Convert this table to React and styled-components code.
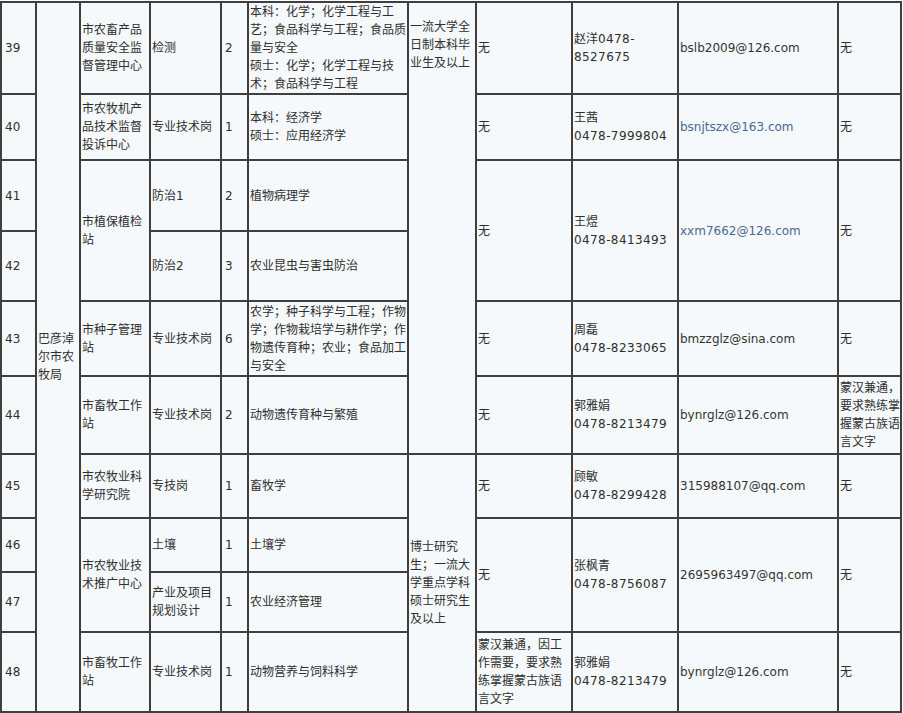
import React from 'react'
import styled, { createGlobalStyle } from 'styled-components'

const Global = createGlobalStyle`
  body {
    margin: 0;
    background: #fff;
    font-family: "DejaVu Sans", "Noto Sans CJK SC", sans-serif;
  }
`;

const Table = styled.table`
  border-collapse: collapse;
  table-layout: fixed;
  width: 901px;
  margin-top: 1px;
  font-size: 12px;
  line-height: 18px;
  color: #2f2f2f;
`;

const Row = styled.tr`
  height: ${(p) => p.$h}px;
`;

const Cell = styled.td`
  border: 2px solid #3f3f3f;
  background: #f6f9fc;
  padding: 0 0 0 1px;
  text-align: left;
  vertical-align: ${(p) => (p.$top ? 'top' : 'middle')};
  ${(p) => p.$top && `padding-top: 15px;`}
  word-break: normal;
  overflow-wrap: normal;
`;

const Num = styled.span`
  padding-left: 2px;
`;

const Phone = styled.span`
  letter-spacing: 0.4px;
`;

const Mail = styled.span`
  color: ${(p) => (p.$link ? '#4a6892' : '#333')};
`;

const cols = [35, 44, 70, 71, 27, 160, 68, 96, 106, 160, 63];

const Contact = ({ name, phone }) => (
  <>
    {name}
    <br />
    <Phone>{phone}</Phone>
  </>
);

const App = () => {
  return (
    <>
      <Global />
      <Table>
        <colgroup>
          {cols.map((w, i) => (
            <col key={i} style={{ width: w }} />
          ))}
        </colgroup>
        <tbody>
          <Row $h={92}>
            <Cell><Num>39</Num></Cell>
            <Cell rowSpan={10}>巴彦淖尔市农牧局</Cell>
            <Cell>市农畜产品质量安全监督管理中心</Cell>
            <Cell>检测</Cell>
            <Cell><Num>2</Num></Cell>
            <Cell>
              本科：化学；化学工程与工艺；食品科学与工程；食品质量与安全
              <br />
              硕士：化学；化学工程与技术；食品科学与工程
            </Cell>
            <Cell rowSpan={6} $top>一流大学全日制本科毕业生及以上</Cell>
            <Cell>无</Cell>
            <Cell>赵洋<Phone>0478-</Phone><br /><Phone>8527675</Phone></Cell>
            <Cell><Mail>bslb2009@126.com</Mail></Cell>
            <Cell>无</Cell>
          </Row>
          <Row $h={66}>
            <Cell><Num>40</Num></Cell>
            <Cell>市农牧机产品技术监督投诉中心</Cell>
            <Cell>专业技术岗</Cell>
            <Cell><Num>1</Num></Cell>
            <Cell>
              本科：经济学
              <br />
              硕士：应用经济学
            </Cell>
            <Cell>无</Cell>
            <Cell><Contact name="王茜" phone="0478-7999804" /></Cell>
            <Cell><Mail $link>bsnjtszx@163.com</Mail></Cell>
            <Cell>无</Cell>
          </Row>
          <Row $h={71}>
            <Cell><Num>41</Num></Cell>
            <Cell rowSpan={2}>市植保植检站</Cell>
            <Cell>防治1</Cell>
            <Cell><Num>2</Num></Cell>
            <Cell>植物病理学</Cell>
            <Cell rowSpan={2}>无</Cell>
            <Cell rowSpan={2}><Contact name="王煜" phone="0478-8413493" /></Cell>
            <Cell rowSpan={2}><Mail $link>xxm7662@126.com</Mail></Cell>
            <Cell rowSpan={2}>无</Cell>
          </Row>
          <Row $h={70}>
            <Cell><Num>42</Num></Cell>
            <Cell>防治2</Cell>
            <Cell><Num>3</Num></Cell>
            <Cell>农业昆虫与害虫防治</Cell>
          </Row>
          <Row $h={75}>
            <Cell><Num>43</Num></Cell>
            <Cell>市种子管理站</Cell>
            <Cell>专业技术岗</Cell>
            <Cell><Num>6</Num></Cell>
            <Cell>农学；种子科学与工程；作物学；作物栽培学与耕作学；作物遗传育种；农业；食品加工与安全</Cell>
            <Cell>无</Cell>
            <Cell><Contact name="周磊" phone="0478-8233065" /></Cell>
            <Cell><Mail>bmzzglz@sina.com</Mail></Cell>
            <Cell>无</Cell>
          </Row>
          <Row $h={78}>
            <Cell><Num>44</Num></Cell>
            <Cell>市畜牧工作站</Cell>
            <Cell>专业技术岗</Cell>
            <Cell><Num>2</Num></Cell>
            <Cell>动物遗传育种与繁殖</Cell>
            <Cell>无</Cell>
            <Cell><Contact name="郭雅娟" phone="0478-8213479" /></Cell>
            <Cell><Mail>bynrglz@126.com</Mail></Cell>
            <Cell>蒙汉兼通，要求熟练掌握蒙古族语言文字</Cell>
          </Row>
          <Row $h={64}>
            <Cell><Num>45</Num></Cell>
            <Cell>市农牧业科学研究院</Cell>
            <Cell>专技岗</Cell>
            <Cell><Num>1</Num></Cell>
            <Cell>畜牧学</Cell>
            <Cell rowSpan={4}>博士研究生；一流大学重点学科硕士研究生及以上</Cell>
            <Cell>无</Cell>
            <Cell><Contact name="顾敏" phone="0478-8299428" /></Cell>
            <Cell><Mail>315988107@qq.com</Mail></Cell>
            <Cell>无</Cell>
          </Row>
          <Row $h={54}>
            <Cell><Num>46</Num></Cell>
            <Cell rowSpan={2}>市农牧业技术推广中心</Cell>
            <Cell>土壤</Cell>
            <Cell><Num>1</Num></Cell>
            <Cell>土壤学</Cell>
            <Cell rowSpan={2}>无</Cell>
            <Cell rowSpan={2}><Contact name="张枫青" phone="0478-8756087" /></Cell>
            <Cell rowSpan={2}><Mail>2695963497@qq.com</Mail></Cell>
            <Cell rowSpan={2}>无</Cell>
          </Row>
          <Row $h={60}>
            <Cell><Num>47</Num></Cell>
            <Cell>产业及项目规划设计</Cell>
            <Cell><Num>1</Num></Cell>
            <Cell>农业经济管理</Cell>
          </Row>
          <Row $h={80}>
            <Cell><Num>48</Num></Cell>
            <Cell>市畜牧工作站</Cell>
            <Cell>专业技术岗</Cell>
            <Cell><Num>1</Num></Cell>
            <Cell>动物营养与饲料科学</Cell>
            <Cell>蒙汉兼通，因工作需要，要求熟练掌握蒙古族语言文字</Cell>
            <Cell><Contact name="郭雅娟" phone="0478-8213479" /></Cell>
            <Cell><Mail>bynrglz@126.com</Mail></Cell>
            <Cell>无</Cell>
          </Row>
        </tbody>
      </Table>
    </>
  )
}

export default App
